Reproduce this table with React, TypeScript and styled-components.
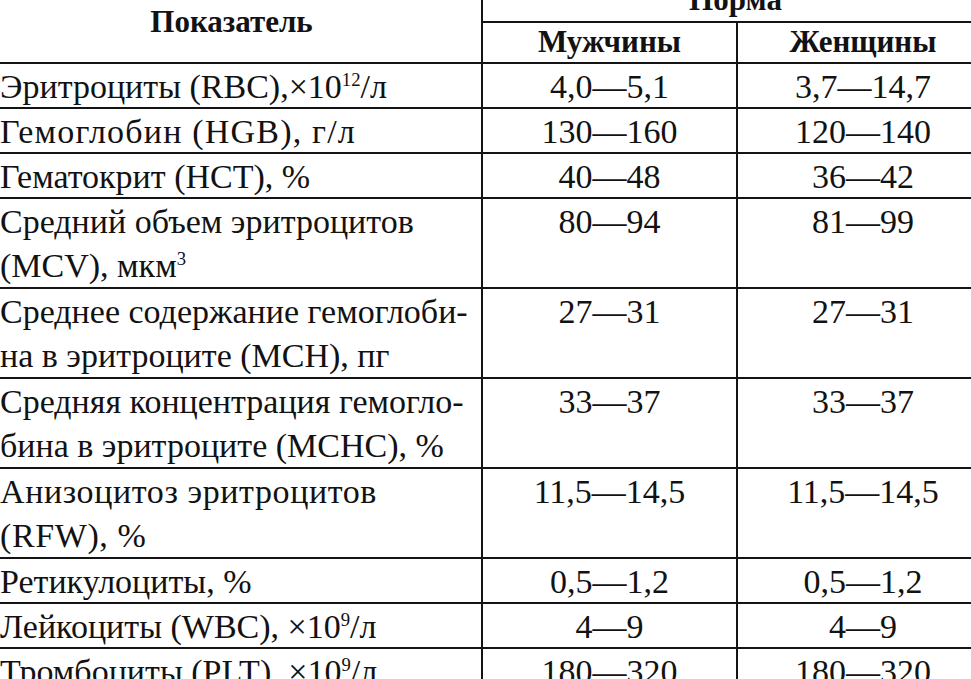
import React from "react";
import styled, { createGlobalStyle } from "styled-components";

const Global = createGlobalStyle`
  html, body { margin: 0; padding: 0; background: #ffffff; }
  body { width: 971px; height: 679px; overflow: hidden; }
`;

const Page = styled.div`
  width: 971px;
  height: 679px;
  overflow: hidden;
  background: #fff;
  font-family: "Liberation Serif", "Times New Roman", serif;
  color: #121212;
`;

const Table = styled.div`
  display: grid;
  grid-template-columns: 499px 253px 250px;
  grid-template-rows: 38.5px 39px;
  gap: 2px;
  padding: 2px;
  background: #141414;
  margin: -20px 0 0 -20px;
  width: max-content;
`;

const HeadCell = styled.div<{ $span?: boolean; $pb: number; $col?: string }>`
  background: #fff;
  display: flex;
  align-items: flex-end;
  justify-content: center;
  font-weight: 700;
  font-size: 31px;
  line-height: 1;
  padding-bottom: ${(p) => p.$pb}px;
  box-sizing: border-box;
  ${(p) => (p.$span ? "grid-row: 1 / span 2;" : "")}
  ${(p) => (p.$col ? `grid-column: ${p.$col};` : "")}
  overflow: hidden;
`;

const Cell = styled.div<{ $lines: number; $center?: boolean; $track?: number }>`
  background: #fff;
  height: ${(p) => (p.$lines === 2 ? 88 : 43)}px;
  box-sizing: border-box;
  padding: 1.5px 0 0 ${(p) => (p.$center ? 0 : 18)}px;
  font-size: 34px;
  line-height: 44px;
  letter-spacing: ${(p) => p.$track ?? 0}px;
  text-align: ${(p) => (p.$center ? "center" : "left")};
  white-space: nowrap;
  overflow: hidden;
`;

const Sup = styled.sup`
  font-size: 0.55em;
  line-height: 0;
  vertical-align: 0.62em;
`;

type Row = {
  label: React.ReactNode;
  men: string;
  women: string;
  lines: number;
  track?: number;
};

const rows: Row[] = [
  {
    label: (
      <>
        Эритроциты (RBC),×10<Sup>12</Sup>/л
      </>
    ),
    men: "4,0—5,1",
    women: "3,7—14,7",
    lines: 1,
  },
  { label: "Гемоглобин (HGB), г/л", men: "130—160", women: "120—140", lines: 1, track: 1.2 },
  { label: "Гематокрит (HCT), %", men: "40—48", women: "36—42", lines: 1 },
  {
    label: (
      <>
        Средний объем эритроцитов
        <br />
        (MCV), мкм<Sup>3</Sup>
      </>
    ),
    men: "80—94",
    women: "81—99",
    lines: 2,
  },
  {
    label: (
      <>
        Среднее содержание гемоглоби-
        <br />
        на в эритроците (MCH), пг
      </>
    ),
    men: "27—31",
    women: "27—31",
    lines: 2,
  },
  {
    label: (
      <>
        Средняя концентрация гемогло-
        <br />
        бина в эритроците (MCHC), %
      </>
    ),
    men: "33—37",
    women: "33—37",
    lines: 2,
  },
  {
    label: (
      <>
        Анизоцитоз эритроцитов
        <br />
        (RFW), %
      </>
    ),
    men: "11,5—14,5",
    women: "11,5—14,5",
    lines: 2,
    track: 0.6,
  },
  { label: "Ретикулоциты, %", men: "0,5—1,2", women: "0,5—1,2", lines: 1 },
  {
    label: (
      <>
        Лейкоциты (WBC), ×10<Sup>9</Sup>/л
      </>
    ),
    men: "4—9",
    women: "4—9",
    lines: 1,
  },
  {
    label: (
      <>
        Тромбоциты (PLT), ×10<Sup>9</Sup>/л
      </>
    ),
    men: "180—320",
    women: "180—320",
    lines: 1,
  },
];

export default function App() {
  return (
    <Page>
      <Global />
      <Table>
        <HeadCell $span $pb={25}>
          Показатель
        </HeadCell>
        <HeadCell $pb={6} $col="2 / span 2">
          Норма
        </HeadCell>
        <HeadCell $pb={5}>Мужчины</HeadCell>
        <HeadCell $pb={5}>Женщины</HeadCell>
        {rows.map((r, i) => (
          <React.Fragment key={i}>
            <Cell $lines={r.lines} $track={r.track}>
              {r.label}
            </Cell>
            <Cell $lines={r.lines} $center>
              {r.men}
            </Cell>
            <Cell $lines={r.lines} $center>
              {r.women}
            </Cell>
          </React.Fragment>
        ))}
      </Table>
    </Page>
  );
}
